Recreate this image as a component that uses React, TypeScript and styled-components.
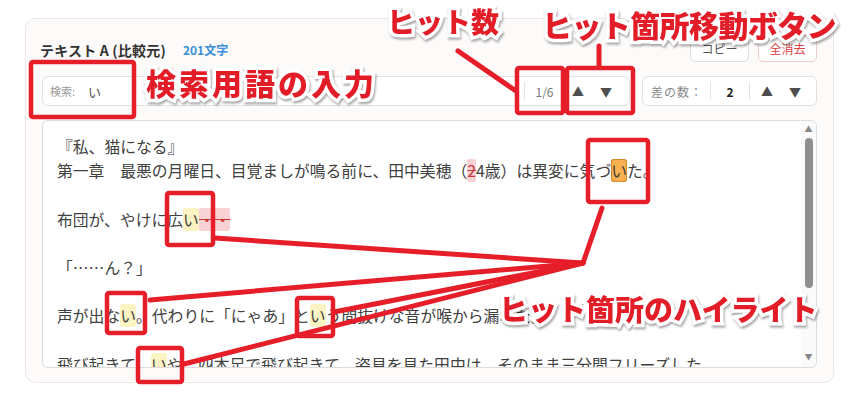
import React, { FC } from "react";
import styled, { createGlobalStyle } from "styled-components";

const GlobalStyle = createGlobalStyle`
  html, body {
    margin: 0;
    padding: 0;
    background: #ffffff;
  }
  body {
    font-family: "Noto Sans CJK JP", "Noto Sans", sans-serif;
    color: #333;
  }
`;

const Page = styled.div`
  position: relative;
  width: 852px;
  height: 400px;
  overflow: hidden;
  padding: 18px 0 0 25px;
  box-sizing: border-box;
`;

const Card = styled.div`
  width: 809px;
  box-sizing: border-box;
  background: #fdfafa;
  border: 1px solid #ece6e6;
  border-radius: 10px;
  padding: 16px 16px 14px 16px;
  display: flex;
  flex-direction: column;
  gap: 14px;
`;

const Header = styled.div`
  height: 27px;
  display: flex;
  align-items: center;
  justify-content: space-between;
`;

const TitleWrap = styled.div`
  display: flex;
  align-items: center;
  gap: 17px;
  margin-left: -2px;
  padding-top: 2px;
`;

const Title = styled.span`
  font-size: 14px;
  font-weight: 700;
  color: #333;
  letter-spacing: 0.2px;
`;

const Count = styled.span`
  font-size: 12px;
  font-weight: 700;
  color: #3b8fd8;
`;

const Actions = styled.div`
  display: flex;
  gap: 9px;
`;

const ActionButton = styled.button<{ danger?: boolean }>`
  width: 59px;
  height: 27px;
  box-sizing: border-box;
  border-radius: 5px;
  background: #fff;
  font-family: inherit;
  font-size: 12px;
  padding: 0;
  color: ${(p) => (p.danger ? "#d9413f" : "#555")};
  border: 1px solid ${(p) => (p.danger ? "#f2cccc" : "#dedede")};
`;

const Toolbar = styled.div`
  height: 30px;
  display: flex;
  gap: 12px;
`;

const Group = styled.div<{ grow?: boolean }>`
  ${(p) => (p.grow ? "flex: 1;" : "width: 175px;")}
  box-sizing: border-box;
  height: 30px;
  border: 1px solid #e3e0e0;
  border-radius: 6px;
  background: #fff;
  display: flex;
  align-items: center;
`;

const SearchLabel = styled.span`
  font-size: 11px;
  color: #999;
  padding-left: 7px;
  width: 38px;
`;

const SearchValue = styled.span`
  font-size: 13px;
  color: #555;
  flex: 1;
`;

const Segment = styled.div<{ w: number; sep?: boolean; center?: boolean }>`
  width: ${(p) => p.w}px;
  box-sizing: border-box;
  display: flex;
  align-items: center;
  justify-content: ${(p) => (p.center ? "center" : "flex-start")};
  height: 18px;
  ${(p) => (p.sep ? "border-left: 1px solid #e6e3e3;" : "")}
`;

const Counter = styled.span`
  font-size: 12px;
  color: #777;
`;

const DiffLabel = styled.span`
  font-size: 12px;
  color: #888;
  padding-left: 8px;
  letter-spacing: 1px;
`;

const DiffValue = styled.span`
  font-size: 12px;
  font-weight: 700;
  color: #222;
`;

const Arrow = styled.span`
  width: 28px;
  text-align: center;
  font-size: 12px;
  color: #4d4d4d;
`;

const Editor = styled.div`
  height: 248px;
  box-sizing: border-box;
  border: 1px solid #dcdcdc;
  border-radius: 6px;
  background: #fff;
  display: flex;
  overflow: hidden;
`;

const Content = styled.div`
  flex: 1;
  padding: 14px 0 0 14px;
  font-size: 15.8px;
  line-height: 24.2px;
  color: #404040;
  white-space: pre;
  overflow: hidden;
`;

const Line = styled.div`
  height: 24.2px;
`;

const Hit = styled.span<{ current?: boolean }>`
  border-radius: 3px;
  background: ${(p) => (p.current ? "#f7b14e" : "#fcf3c2")};
  ${(p) => (p.current ? "box-shadow: inset 0 0 0 1px #d68a2c;" : "")}
`;

const Del = styled.span`
  background: #f8d2d5;
  color: #c93a3a;
  text-decoration: line-through;
  border-radius: 2px;
`;

const ScrollBar = styled.div`
  width: 15px;
  background: #fafafa;
  display: flex;
  flex-direction: column;
  align-items: center;
  padding: 2px 0 4px;
  box-sizing: border-box;
`;

const ScrollArrow = styled.span`
  font-size: 8px;
  line-height: 12px;
  color: #888;
`;

const Thumb = styled.div`
  width: 8px;
  height: 150px;
  margin-top: 3px;
  border-radius: 4px;
  background: #8f8f8f;
`;

const Track = styled.div`
  flex: 1;
`;

const Overlay = styled.svg`
  position: absolute;
  left: 0;
  top: 0;
  pointer-events: none;
`;

const Label = styled.div<{ x: number; y: number; size: number; spacing?: number }>`
  position: absolute;
  left: ${(p) => p.x}px;
  top: ${(p) => p.y}px;
  font-size: ${(p) => p.size}px;
  letter-spacing: ${(p) => p.spacing ?? 0}px;
  line-height: 1;
  font-weight: 900;
  color: #e31d28;
  white-space: nowrap;
  -webkit-text-stroke: 7px #fff;
  paint-order: stroke fill;
  filter: drop-shadow(1px 2px 1px rgba(0, 0, 0, 0.35));
`;

const RED = "#e51e29";

const boxes = [
  [31, 62, 103, 55],
  [517, 68, 46, 45],
  [567, 68, 66, 45],
  [588, 140, 60, 62],
  [167, 193, 46, 52],
  [107, 293, 38, 40],
  [297, 298, 36, 38],
  [138, 348, 44, 34],
];

const lines = [
  [458, 51, 516, 91],
  [599, 46, 599, 66],
  [602, 208, 583, 263],
  [583, 263, 215, 238],
  [583, 263, 150, 300],
  [583, 263, 334, 312],
  [583, 263, 184, 364],
];

const App: FC = () => {
  return (
    <>
      <GlobalStyle />
      <Page>
        <Card>
          <Header>
            <TitleWrap>
              <Title>テキスト A (比較元)</Title>
              <Count>201文字</Count>
            </TitleWrap>
            <Actions>
              <ActionButton>コピー</ActionButton>
              <ActionButton danger>全消去</ActionButton>
            </Actions>
          </Header>
          <Toolbar>
            <Group grow>
              <SearchLabel>検索:</SearchLabel>
              <SearchValue>い</SearchValue>
              <Segment w={40} sep center>
                <Counter>1/6</Counter>
              </Segment>
              <Arrow>▲</Arrow>
              <Arrow>▼</Arrow>
              <Segment w={9} />
            </Group>
            <Group>
              <Segment w={67}>
                <DiffLabel>差の数：</DiffLabel>
              </Segment>
              <Segment w={39} sep center>
                <DiffValue>2</DiffValue>
              </Segment>
              <Segment w={4} sep />
              <Arrow>▲</Arrow>
              <Arrow>▼</Arrow>
            </Group>
          </Toolbar>
          <Editor>
            <Content>
              <Line>『私、猫になる』</Line>
              <Line>
                第一章　最悪の月曜日、目覚ましが鳴る前に、田中美穂（<Del>2</Del>4歳）は異変に気づ
                <Hit current>い</Hit>た。
              </Line>
              <Line />
              <Line>
                布団が、やけに広<Hit>い</Hit>
                <Del>・・</Del>
              </Line>
              <Line />
              <Line>「……ん？」</Line>
              <Line />
              <Line>
                声が出な<Hit>い</Hit>。代わりに「にゃあ」と<Hit>い</Hit>う間抜けな音が喉から漏れた。
              </Line>
              <Line />
              <Line>
                飛び起きて、<Hit>い</Hit>や、四本足で飛び起きて、姿見を見た田中は、そのまま三分間フリーズした。
              </Line>
            </Content>
            <ScrollBar>
              <ScrollArrow>▲</ScrollArrow>
              <Thumb />
              <Track />
              <ScrollArrow>▼</ScrollArrow>
            </ScrollBar>
          </Editor>
        </Card>

        <Overlay width={852} height={400} viewBox="0 0 852 400">
          {lines.map(([x1, y1, x2, y2], i) => (
            <line
              key={`l${i}`}
              x1={x1}
              y1={y1}
              x2={x2}
              y2={y2}
              stroke={RED}
              strokeWidth={5}
              strokeLinecap="round"
            />
          ))}
          {boxes.map(([x, y, w, h], i) => (
            <rect
              key={`b${i}`}
              x={x}
              y={y}
              width={w}
              height={h}
              rx={2}
              fill="none"
              stroke={RED}
              strokeWidth={4.5}
            />
          ))}
        </Overlay>
        <Label x={387} y={7} size={28}>
          ヒット数
        </Label>
        <Label x={542} y={9} size={30} spacing={-0.6}>
          ヒット箇所移動ボタン
        </Label>
        <Label x={146} y={67} size={30} spacing={3}>
          検索用語の入力
        </Label>
        <Label x={499} y={294} size={29}>
          ヒット箇所のハイライト
        </Label>
      </Page>
    </>
  );
};

export default App;
